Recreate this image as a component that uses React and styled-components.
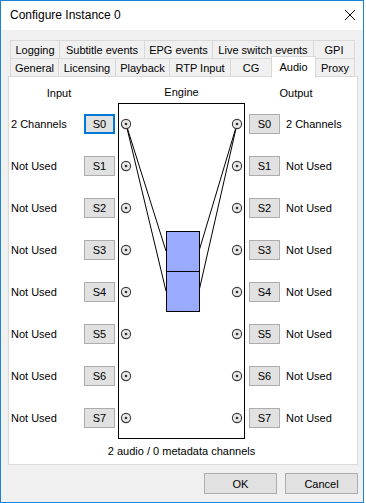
import styled, { createGlobalStyle } from "styled-components";

const GlobalStyle = createGlobalStyle`
  html, body {
    margin: 0;
    padding: 0;
    background: #ffffff;
  }
  * {
    box-sizing: border-box;
  }
`;

const Window = styled.div`
  width: 364px;
  height: 503px;
  border: 1px solid #1883d7;
  background: #f0f0f0;
  display: flex;
  flex-direction: column;
  font-family: "Liberation Sans", Arial, sans-serif;
  font-size: 11px;
  color: #000;
`;

const TitleBar = styled.div`
  height: 29px;
  background: #ffffff;
  display: flex;
  align-items: center;
  justify-content: space-between;
  padding: 0 7px 1px 9px;
  font-size: 12px;
`;

const Body = styled.div`
  display: flex;
  flex-direction: column;
  padding-top: 10px;
`;

const TabRow = styled.div`
  display: flex;
  margin-left: 9px;
  margin-top: ${(p) => (p.$second ? "-1px" : "0")};
  height: 19px;
  align-items: flex-end;
`;

const Tab = styled.div`
  width: ${(p) => p.$w}px;
  height: ${(p) => (p.$active ? 22 : 19)}px;
  margin-right: -1px;
  margin-bottom: ${(p) => (p.$active ? "-1px" : "0")};
  border: 1px solid #d9d9d9;
  border-bottom: ${(p) => (p.$active ? "none" : "1px solid #d9d9d9")};
  background: ${(p) => (p.$active ? "#ffffff" : "#f0f0f0")};
  position: relative;
  z-index: ${(p) => (p.$active ? 2 : 1)};
  display: flex;
  align-items: ${(p) => (p.$active ? "flex-start" : "center")};
  justify-content: center;
  padding-top: ${(p) => (p.$active ? "3px" : "0")};
  white-space: nowrap;
  line-height: 14px;
`;

const Panel = styled.div`
  margin: -1px 0 0 7px;
  width: 350px;
  height: 389px;
  background: #ffffff;
  border: 1px solid #d9d9d9;
  display: grid;
  grid-template-columns: 106px 130px 1fr;
  grid-template-rows: 26px 336px auto;
  position: relative;
  z-index: 1;
`;

const HeaderLabel = styled.div`
  padding-top: ${(p) => p.$pt || 8}px;
  line-height: 14px;
  text-align: center;
  padding-right: ${(p) => p.$pr || 0}px;
  padding-left: ${(p) => p.$pl || 0}px;
`;

const SideColumn = styled.div`
  display: flex;
  flex-direction: column;
  padding-left: ${(p) => (p.$right ? 4 : 2)}px;
`;

const ChannelRow = styled.div`
  height: 42px;
  display: flex;
  align-items: center;
  justify-content: ${(p) => (p.$right ? "flex-start" : "space-between")};
  gap: 6px;
  padding-bottom: 1px;
`;

const ChannelLabel = styled.span`
  white-space: nowrap;
`;

const SlotButton = styled.button`
  width: 31px;
  height: 20px;
  padding: 0;
  font-family: inherit;
  font-size: 11px;
  color: #000;
  background: #e1e1e1;
  border: ${(p) => (p.$focused ? "2px solid #0078d7" : "1px solid #adadad")};
  display: flex;
  align-items: center;
  justify-content: center;
`;

const EngineBox = styled.div`
  margin-left: 3px;
  width: 127px;
  height: 336px;
  border: 1px solid #000;
  background: #ffffff;
`;

const Footer = styled.div`
  grid-column: 2;
  margin-left: 3px;
  width: 127px;
  margin-top: 5px;
  line-height: 14px;
  white-space: nowrap;
  display: flex;
  justify-content: center;
`;

const ButtonBar = styled.div`
  display: flex;
  justify-content: flex-end;
  gap: 8px;
  padding: 8px 5px 0 0;
`;

const DialogButton = styled.button`
  width: 73px;
  height: 21px;
  padding: 0;
  font-family: inherit;
  font-size: 11px;
  color: #000;
  background: #e1e1e1;
  border: 1px solid #adadad;
`;

const topTabs = [
  { name: "Logging", w: 50 },
  { name: "Subtitle events", w: 86 },
  { name: "EPG events", w: 69 },
  { name: "Live switch events", w: 102 },
  { name: "GPI", w: 42 },
];

const bottomTabs = [
  { name: "General", w: 49 },
  { name: "Licensing", w: 58 },
  { name: "Playback", w: 55 },
  { name: "RTP Input", w: 62 },
  { name: "CG", w: 42 },
  { name: "Audio", w: 45, active: true },
  { name: "Proxy", w: 40 },
];

const channels = [0, 1, 2, 3, 4, 5, 6, 7].map((i) => ({
  slot: "S" + i,
  label: i === 0 ? "2 Channels" : "Not Used",
}));

const CloseIcon = () => (
  <svg width="12" height="12" viewBox="0 0 12 12">
    <path d="M1 1 L11 11 M11 1 L1 11" stroke="#000" strokeWidth="1" fill="none" />
  </svg>
);

const Port = ({ x, y }) => (
  <g>
    <circle cx={x} cy={y} r="4.6" fill="#e8e8e8" stroke="#3a3a3a" strokeWidth="1.1" />
    <circle cx={x} cy={y} r="1.3" fill="#333" />
  </g>
);

const EngineDiagram = () => {
  const ys = channels.map((_, i) => 20 + 42 * i);
  return (
    <svg width="125" height="334" viewBox="0 0 125 334">
      <path
        d="M7 20 L47 147 M7 20 L47 187 M118 20 L80 147 M118 20 L80 187"
        stroke="#000"
        strokeWidth="1"
        fill="none"
      />
      <rect x="47.5" y="127.5" width="33" height="40" fill="#9aaaff" stroke="#000" strokeWidth="1" />
      <rect x="47.5" y="167.5" width="33" height="40" fill="#9aaaff" stroke="#000" strokeWidth="1" />
      {ys.map((y) => (
        <g key={y}>
          <Port x={7} y={y} />
          <Port x={118} y={y} />
        </g>
      ))}
    </svg>
  );
};

export default function App() {
  return (
    <>
      <GlobalStyle />
      <Window>
        <TitleBar>
          <span>Configure Instance 0</span>
          <CloseIcon />
        </TitleBar>
        <Body>
          <TabRow>
            {topTabs.map((t) => (
              <Tab key={t.name} $w={t.w}>
                {t.name}
              </Tab>
            ))}
          </TabRow>
          <TabRow $second>
            {bottomTabs.map((t) => (
              <Tab key={t.name} $w={t.w} $active={t.active}>
                {t.name}
              </Tab>
            ))}
          </TabRow>
          <Panel>
            <HeaderLabel $pr={6} $pt={9}>Input</HeaderLabel>
            <HeaderLabel $pl={3}>Engine</HeaderLabel>
            <HeaderLabel $pr={10} $pt={9}>Output</HeaderLabel>
            <SideColumn>
              {channels.map((c, i) => (
                <ChannelRow key={c.slot}>
                  <ChannelLabel>{c.label}</ChannelLabel>
                  <SlotButton $focused={i === 0}>{c.slot}</SlotButton>
                </ChannelRow>
              ))}
            </SideColumn>
            <EngineBox>
              <EngineDiagram />
            </EngineBox>
            <SideColumn $right>
              {channels.map((c) => (
                <ChannelRow key={c.slot} $right>
                  <SlotButton>{c.slot}</SlotButton>
                  <ChannelLabel>{c.label}</ChannelLabel>
                </ChannelRow>
              ))}
            </SideColumn>
            <Footer>2 audio / 0 metadata channels</Footer>
          </Panel>
          <ButtonBar>
            <DialogButton>OK</DialogButton>
            <DialogButton>Cancel</DialogButton>
          </ButtonBar>
        </Body>
      </Window>
    </>
  );
}
